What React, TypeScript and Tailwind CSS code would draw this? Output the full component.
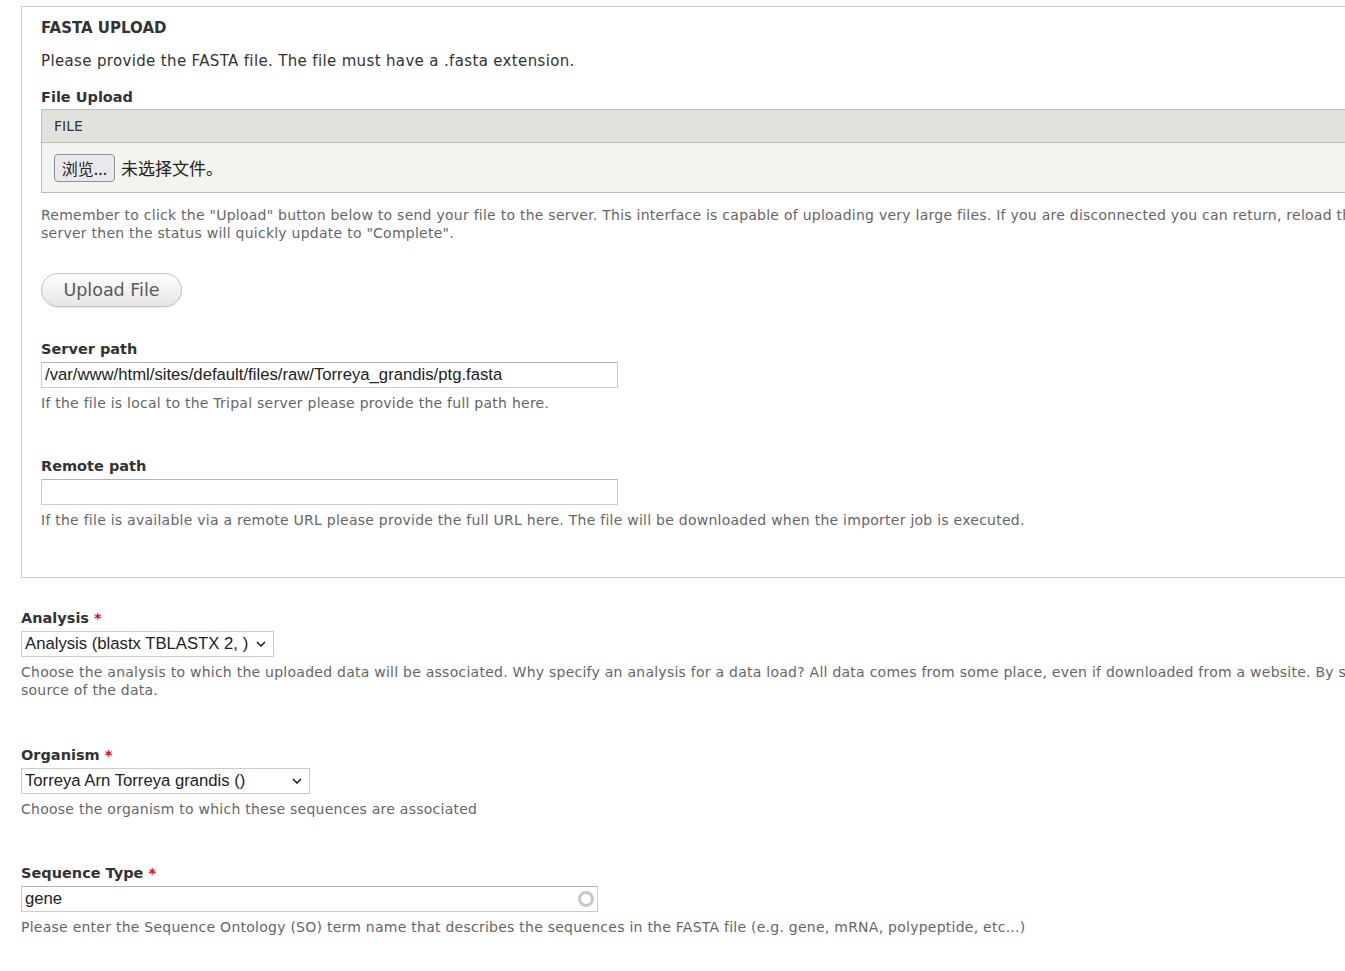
export default function App() {
  const label = "block text-[14.5px] leading-[18px] font-bold text-[#333]";
  const desc = "whitespace-nowrap text-[14px] leading-[18px] tracking-[0.25px] text-[#666]";
  const input =
    "block h-[26px] border border-[#ccc] border-t-[#b4b4b4] bg-white px-[3px] text-[16.7px] text-[#222] outline-none";
  const arial = { fontFamily: '"Liberation Sans", Arial, sans-serif' };
  const cjk = { fontFamily: '"Noto Sans CJK SC", sans-serif' };
  const req = <span className="ml-[5px] text-[#e00]">*</span>;

  const Chevron = () => (
    <svg width="10" height="6" viewBox="0 0 10 6" className="shrink-0">
      <path d="M1 1l4 4 4-4" fill="none" stroke="#222" strokeWidth="1.6" />
    </svg>
  );

  return (
    <div
      className="h-[971px] w-[1345px] overflow-hidden bg-white text-[#333]"
      style={{ fontFamily: '"DejaVu Sans", "Noto Sans CJK SC", sans-serif' }}
    >
      <div className="w-[1700px] pl-[21px] pt-[6px]">
        {/* file upload fieldset */}
        <fieldset className="w-[1600px] border border-[#ccc] pl-[19px] pt-[12px] pb-[48px]">
          <h2 className="text-[15px] leading-[18px] font-bold uppercase text-[#333]">FASTA Upload</h2>
          <p className="mt-[15px] text-[15px] leading-[18px] tracking-[0.35px]">
            Please provide the FASTA file. The file must have a .fasta extension.
          </p>

          <label className={label + " mt-[18px]"}>File Upload</label>
          <div className="mt-[3px] w-[1500px] border border-[#bebfb9]">
            <div className="flex h-[32px] items-center bg-[#e1e2dc] pl-[12px] text-[14px] uppercase text-[#333]">
              File
            </div>
            <div className="flex h-[50px] items-center border-t border-[#bebfb9] bg-[#f3f4ee] pl-[12px]">
              <button
                className="h-[28px] w-[61px] rounded-[4px] border border-[#8f8f9d] bg-[#e9e9ed] text-[16px] text-[#222]"
                style={cjk}
              >
                浏览...
              </button>
              <span className="ml-[6px] text-[17px] text-[#222]" style={cjk}>
                未选择文件。
              </span>
            </div>
          </div>
          <div className={desc + " mt-[13px]"}>
            <div>
              Remember to click the "Upload" button below to send your file to the server. This interface is capable
              of uploading very large files. If you are disconnected you can return, reload the page and resume the
              upload. If the file is already present on the
            </div>
            <div>server then the status will quickly update to "Complete".</div>
          </div>

          <button className="mt-[31px] block h-[34px] w-[141px] rounded-[20px] border border-[#c2c2c2] bg-gradient-to-b from-[#fdfdfd] to-[#e6e6e6] text-[17.5px] text-[#5a5a5a] shadow-[0_1px_1px_rgba(0,0,0,0.08)]">
            Upload File
          </button>

          <label className={label + " mt-[33px]"}>Server path</label>
          <input
            className={input + " mt-[3.5px] w-[577px]"}
            style={arial}
            defaultValue="/var/www/html/sites/default/files/raw/Torreya_grandis/ptg.fasta"
          />
          <p className={desc + " mt-[6.5px]"}>If the file is local to the Tripal server please provide the full path here.</p>

          <label className={label + " mt-[45px]"}>Remote path</label>
          <input className={input + " mt-[3.5px] w-[577px]"} style={arial} />
          <p className={desc + " mt-[6.5px]"}>
            If the file is available via a remote URL please provide the full URL here. The file will be downloaded
            when the importer job is executed.
          </p>
        </fieldset>

        {/* analysis */}
        <label className={label + " mt-[31px]"}>
          Analysis{req}
        </label>
        <div
          className="mt-[3.5px] flex h-[26px] w-[253px] items-center justify-between border border-[#ccc] bg-white pl-[3px] pr-[7px] text-[16.7px] text-[#222]"
          style={arial}
        >
          <span>Analysis (blastx TBLASTX 2, )</span>
          <Chevron />
        </div>
        <div className={desc + " mt-[6.5px]"}>
          <div>
            Choose the analysis to which the uploaded data will be associated. Why specify an analysis for a data
            load? All data comes from some place, even if downloaded from a website. By specifying analysis details
            for all data loads it allows you to describe the
          </div>
          <div>source of the data.</div>
        </div>

        {/* organism */}
        <label className={label + " mt-[47px]"}>
          Organism{req}
        </label>
        <div
          className="mt-[3.5px] flex h-[26px] w-[289px] items-center justify-between border border-[#ccc] bg-white pl-[3px] pr-[7px] text-[16.7px] text-[#222]"
          style={arial}
        >
          <span>Torreya Arn Torreya grandis ()</span>
          <Chevron />
        </div>
        <p className={desc + " mt-[6.5px]"}>Choose the organism to which these sequences are associated</p>

        {/* sequence type */}
        <label className={label + " mt-[46px]"}>
          Sequence Type{req}
        </label>
        <div className="relative mt-[3.5px] w-[577px]">
          <input className={input + " w-[577px]"} style={arial} defaultValue="gene" />
          <span className="absolute right-[4px] top-[5px] h-[16px] w-[16px] rounded-full border-[3px] border-[#c8c8c8]" />
        </div>
        <p className={desc + " mt-[6.5px]"}>
          Please enter the Sequence Ontology (SO) term name that describes the sequences in the FASTA file (e.g.
          gene, mRNA, polypeptide, etc...)
        </p>
      </div>
    </div>
  );
}
